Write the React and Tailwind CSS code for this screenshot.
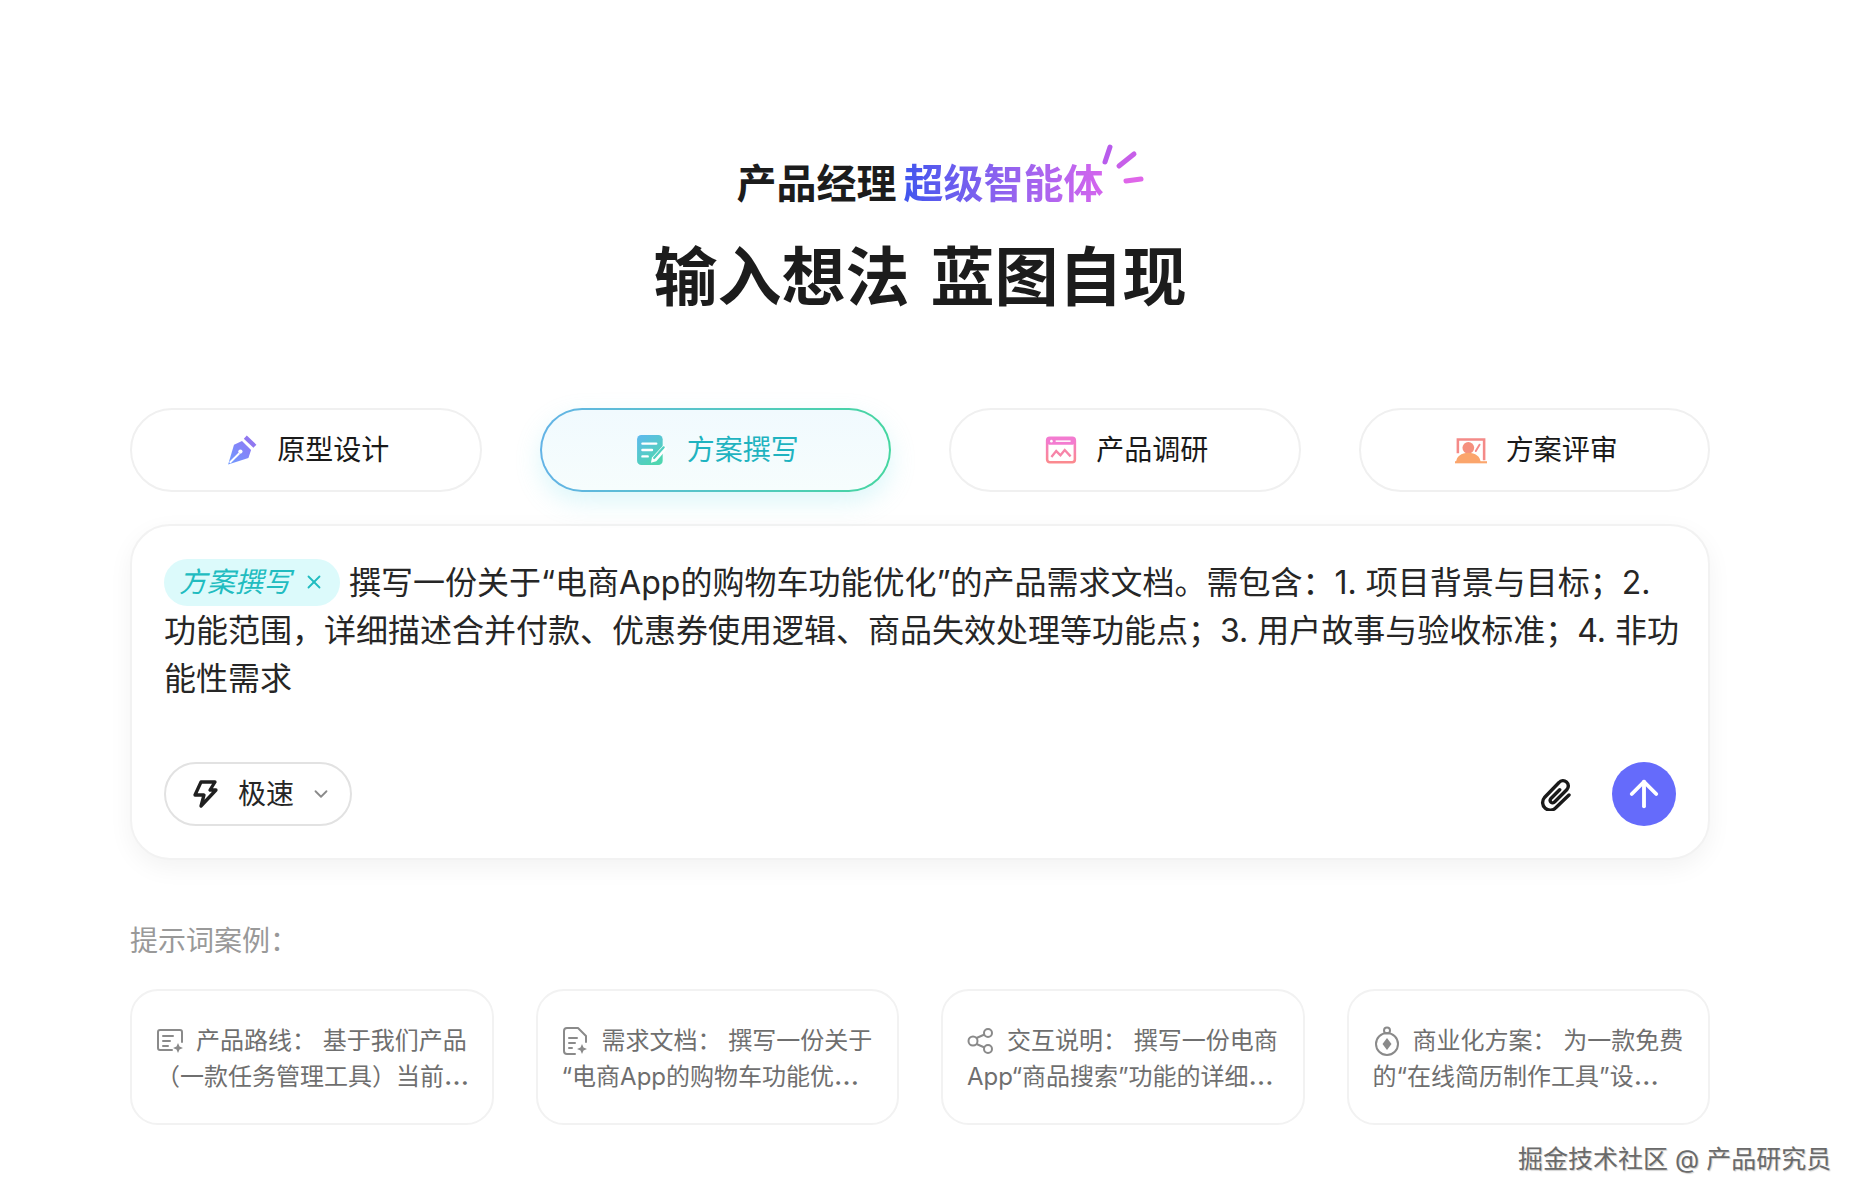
import { ChevronDown, X, ArrowUp } from "lucide-react";

const PenIcon = () => (
	<svg width="32" height="32" viewBox="0 0 30 30">
		<defs>
			<linearGradient id="pen" x1="0" y1="1" x2="1" y2="0">
				<stop offset="0" stopColor="#6f9bff" />
				<stop offset="1" stopColor="#8f78f5" />
			</linearGradient>
		</defs>
		<path d="M19.500 1.500L28.500 10l-2.800 3-9-8.500z" fill="#9078f0" />
		<path d="M15 6.500L23.500 15l-2.500 7.500L2 28.500 7.500 10z" fill="url(#pen)" />
		<path d="M3.500 27l9-9" stroke="#fff" strokeWidth="1.800" />
		<circle cx="13.500" cy="16.500" r="2" fill="#fff" />
	</svg>
);

const DocIcon = () => (
	<svg width="32" height="32" viewBox="0 0 30 30">
		<defs>
			<linearGradient id="doc" x1="0" y1="0" x2="0.6" y2="1">
				<stop offset="0" stopColor="#5fb8f0" />
				<stop offset="1" stopColor="#4fd6b0" />
			</linearGradient>
		</defs>
		<rect x="1" y="1" width="24" height="28" rx="4" fill="url(#doc)" />
		<path d="M6 9h13M6 15h9M6 21h5" stroke="#fff" strokeWidth="2.200" strokeLinecap="round" />
		<path d="M26 10L15 22l-1 5 5-1.500L29.500 13.500z" fill="#fff" />
		<path d="M26 12.500L17 22.500" stroke="#4fd0c0" strokeWidth="2" strokeLinecap="round" />
	</svg>
);

const WindowIcon = () => (
	<svg width="32" height="32" viewBox="0 0 30 30">
		<defs>
			<linearGradient id="win" x1="0" y1="0" x2="0" y2="1">
				<stop offset="0" stopColor="#f37bd0" />
				<stop offset="1" stopColor="#fb8a8f" />
			</linearGradient>
		</defs>
		<rect x="2" y="3.500" width="26" height="23" rx="2.500" fill="none" stroke="url(#win)" strokeWidth="2.400" />
		<rect x="2" y="3.500" width="26" height="6.500" rx="2" fill="#f37bd0" />
		<circle cx="6" cy="6.700" r="1.200" fill="#fff" />
		<path d="M10 6.700h14" stroke="#fff" strokeWidth="1.400" />
		<path d="M6 21.500l4.500-5.500 4 4 4-5 5.500 6" fill="none" stroke="#f784a8" strokeWidth="2.200" />
	</svg>
);

const ReviewIcon = () => (
	<svg width="32" height="32" viewBox="0 0 30 30">
		<path d="M1.500 4h27v20.500h-2.400V6.400H3.900V18H1.500z" fill="#f48a88" />
		<circle cx="12.500" cy="13" r="5.500" fill="#f5907e" />
		<path d="M1 27c0-6 5-9.500 11.500-9.500S24 21 24 27z" fill="#fba56c" />
		<path d="M19.500 16l3.500-6" stroke="#f48a8a" strokeWidth="1.800" strokeLinecap="round" />
		<path d="M0 25.500h30v2H0z" fill="#fba56c" />
	</svg>
);

const BoltIcon = () => (
	<svg width="30" height="30" viewBox="0 0 30 30" fill="none" stroke="#1f1f1f" strokeWidth="3.300" strokeLinejoin="round" strokeLinecap="round">
		<path d="M11 3h14l-5 8h6L11 27l3-11H5z" />
	</svg>
);

const ClipIcon = () => (
	<svg width="34" height="34" viewBox="0 0 34 34" fill="none" stroke="#1a1a1a" strokeWidth="3.400" strokeLinecap="round" strokeLinejoin="round">
		<path d="M30 18L17 30.500a7 7 0 0 1-11.500-10L20 5.500a5.200 5.200 0 0 1 8 7L15.500 25a2.400 2.400 0 0 1-3.800-3.200l9-9" />
	</svg>
);

const RouteIcon = () => (
	<svg width="28" height="28" viewBox="0 0 28 28" fill="none" stroke="#8a8a8a" strokeWidth="2" strokeLinecap="round">
		<path d="M16 23H4a2 2 0 0 1-2-2V5a2 2 0 0 1 2-2h20a2 2 0 0 1 2 2v10" />
		<path d="M7 9h10M7 14h7M7 19h5" />
		<path d="M22 16l1.500 3.500L27 21l-3.500 1.500L22 26l-1.500-3.500L17 21l3.500-1.500z" fill="#8a8a8a" stroke="none" />
	</svg>
);

const FileIcon = () => (
	<svg width="26" height="30" viewBox="0 0 26 30" fill="none" stroke="#8a8a8a" strokeWidth="2" strokeLinecap="round" strokeLinejoin="round">
		<path d="M13 28H5a3 3 0 0 1-3-3V5a3 3 0 0 1 3-3h11l8 8v6" />
		<path d="M7 12h8M7 17h6M7 22h3" />
		<path d="M20 18l1.500 3.500L25 23l-3.500 1.500L20 28l-1.500-3.500L15 23l3.500-1.500z" fill="#8a8a8a" stroke="none" />
	</svg>
);

const ShareIcon = () => (
	<svg width="28" height="26" viewBox="0 0 28 26" fill="none" stroke="#8a8a8a" strokeWidth="2">
		<circle cx="6" cy="13" r="4.500" />
		<circle cx="21" cy="5" r="4" />
		<circle cx="21" cy="21" r="4" />
		<path d="M9.500 10l8-3.500M9.500 16l8 3.500" />
	</svg>
);

const MoneyIcon = () => (
	<svg width="28" height="30" viewBox="0 0 28 30" fill="none" stroke="#8a8a8a" strokeWidth="2">
		<circle cx="14" cy="18" r="11" />
		<circle cx="14" cy="4.500" r="3" />
		<path d="M14 12l4.500 6-4.500 6-4.500-6z" fill="#8a8a8a" stroke="none" />
	</svg>
);

const tabs = [
	{ label: "原型设计", icon: <PenIcon /> },
	{ label: "方案撰写", icon: <DocIcon />, active: true },
	{ label: "产品调研", icon: <WindowIcon /> },
	{ label: "方案评审", icon: <ReviewIcon /> },
];

const examples = [
	{ icon: <RouteIcon />, first: "产品路线： 基于我们产品", second: "（一款任务管理工具）当前" },
	{ icon: <FileIcon />, first: "需求文档： 撰写一份关于", second: "“电商App的购物车功能优" },
	{ icon: <ShareIcon />, first: "交互说明： 撰写一份电商", second: "App“商品搜索”功能的详细" },
	{ icon: <MoneyIcon />, first: "商业化方案： 为一款免费", second: "的“在线简历制作工具”设" },
];

const Tab = ({ label, icon, active }) => {
	if (active) {
		return (
			<div className="rounded-full p-[2px] bg-gradient-to-r from-[#63b3e6] to-[#45d6a0] shadow-[0_10px_24px_rgba(120,225,235,0.25)]">
				<div className="h-full rounded-full bg-gradient-to-b from-[#f1fafe] to-[#f6fdfd] flex items-center justify-center gap-[19px] pl-[4px] text-[28px] text-[#1fb3c0]">
					{icon}
					<span>{label}</span>
				</div>
			</div>
		);
	}
	return (
		<div className="rounded-full border-2 border-[#f0f0f0] bg-white flex items-center justify-center gap-[19px] pl-[4px] text-[28px] text-[#1a1a1a]">
			{icon}
			<span>{label}</span>
		</div>
	);
};

const App = () => {
	return (
		<main className="relative w-full h-[1204px] overflow-hidden bg-white pl-[130px] pr-[150px] pt-[159px] font-[Inter,'Noto_Sans_CJK_SC',sans-serif]">
			{/* Heading */}
			<div className="flex flex-col items-center">
				<div className="relative text-[40px] leading-[50px] font-bold text-[#1c1c1c]">
					产品经理<span className="ml-[7px] bg-gradient-to-r from-[#3f55ee] to-[#d565ee] bg-clip-text text-transparent">超级智能体</span>
					<svg className="absolute left-[363px] -top-[16px]" width="46" height="46" viewBox="0 0 46 46" fill="none" strokeWidth="5" strokeLinecap="round">
						<path d="M10 4L5 19" stroke="#b85cec" />
						<path d="M34 11L19 23" stroke="#c75fe9" />
						<path d="M41 36l-15 2" stroke="#df66e9" />
					</svg>
				</div>
				<h1 className="mt-[28px] text-[64px] leading-[80px] font-bold text-[#1c1c1c]">
					输入想法 <span className="ml-[6px]">蓝图自现</span>
				</h1>
			</div>

			{/* Tabs */}
			<div className="mt-[91px] grid grid-cols-4 gap-[58px] h-[84px]">
				{tabs.map((tab) => (
					<Tab key={tab.label} {...tab} />
				))}
			</div>

			{/* Input */}
			<div className="mt-[32px] h-[336px] rounded-[40px] border-2 border-[#f2f2f2] bg-white shadow-[0_8px_24px_rgba(0,0,0,0.05)] pl-[32px] pr-[26px] pt-[33px] pb-[32px] flex flex-col justify-between">
				<p className="text-[32px] leading-[48px] text-[#262626]">
					<span className="inline-flex items-center align-middle -mt-[6px] mr-[9px] h-[47px] rounded-full bg-[#dcfafb] pl-[15px] pr-[15px] gap-[12px] text-[28px] italic text-[#21bcc0]">
						方案撰写
						<X size={22} strokeWidth={2} />
					</span>
					撰写一份关于“电商App的购物车功能优化”的产品需求文档。需包含：1. 项目背景与目标；2. 功能范围，详细描述合并付款、优惠券使用逻辑、商品失效处理等功能点；3. 用户故事与验收标准；4. 非功能性需求
				</p>
				<div className="flex items-center justify-between pr-[6px]">
					<div className="h-[64px] w-[188px] rounded-full border-2 border-[#e2e2e2] flex items-center pl-[24px] gap-[18px] text-[28px] text-[#262626]">
						<BoltIcon />
						<span>极速</span>
						<ChevronDown size={22} className="-ml-[2px] text-[#8a8a8a]" />
					</div>
					<div className="flex items-center gap-[39px]">
						<ClipIcon />
						<button className="w-[64px] h-[64px] rounded-full bg-[#656bfb] flex items-center justify-center">
							<ArrowUp size={42} strokeWidth={2.200} className="text-white" />
						</button>
					</div>
				</div>
			</div>

			{/* Examples */}
			<p className="mt-[63px] text-[28px] leading-[36px] text-[#999999]">提示词案例：</p>
			<div className="mt-[30px] grid grid-cols-4 gap-[42px]">
				{examples.map((item) => (
					<div key={item.first} className="h-[136px] rounded-[28px] border-2 border-[#f2f2f2] bg-white px-[24px] pt-[32px] text-[24px] leading-[36px] text-[#6f6f6f] whitespace-pre">
						<div className="flex items-center gap-[10px]">
							<div className="w-[30px] shrink-0 flex">{item.icon}</div>
							<span>{item.first}</span>
						</div>
						<div>
							{item.second}
							<span className="text-[29px] leading-none">…</span>
						</div>
					</div>
				))}
			</div>

			{/* Watermark */}
			<div className="absolute left-[1518px] top-[1141px] text-[25px] leading-[36px] text-[#6a6a6a] [text-shadow:1px_1px_1px_rgba(0,0,0,0.2)]">
				掘金技术社区 @ 产品研究员
			</div>
		</main>
	);
};

export default App;
